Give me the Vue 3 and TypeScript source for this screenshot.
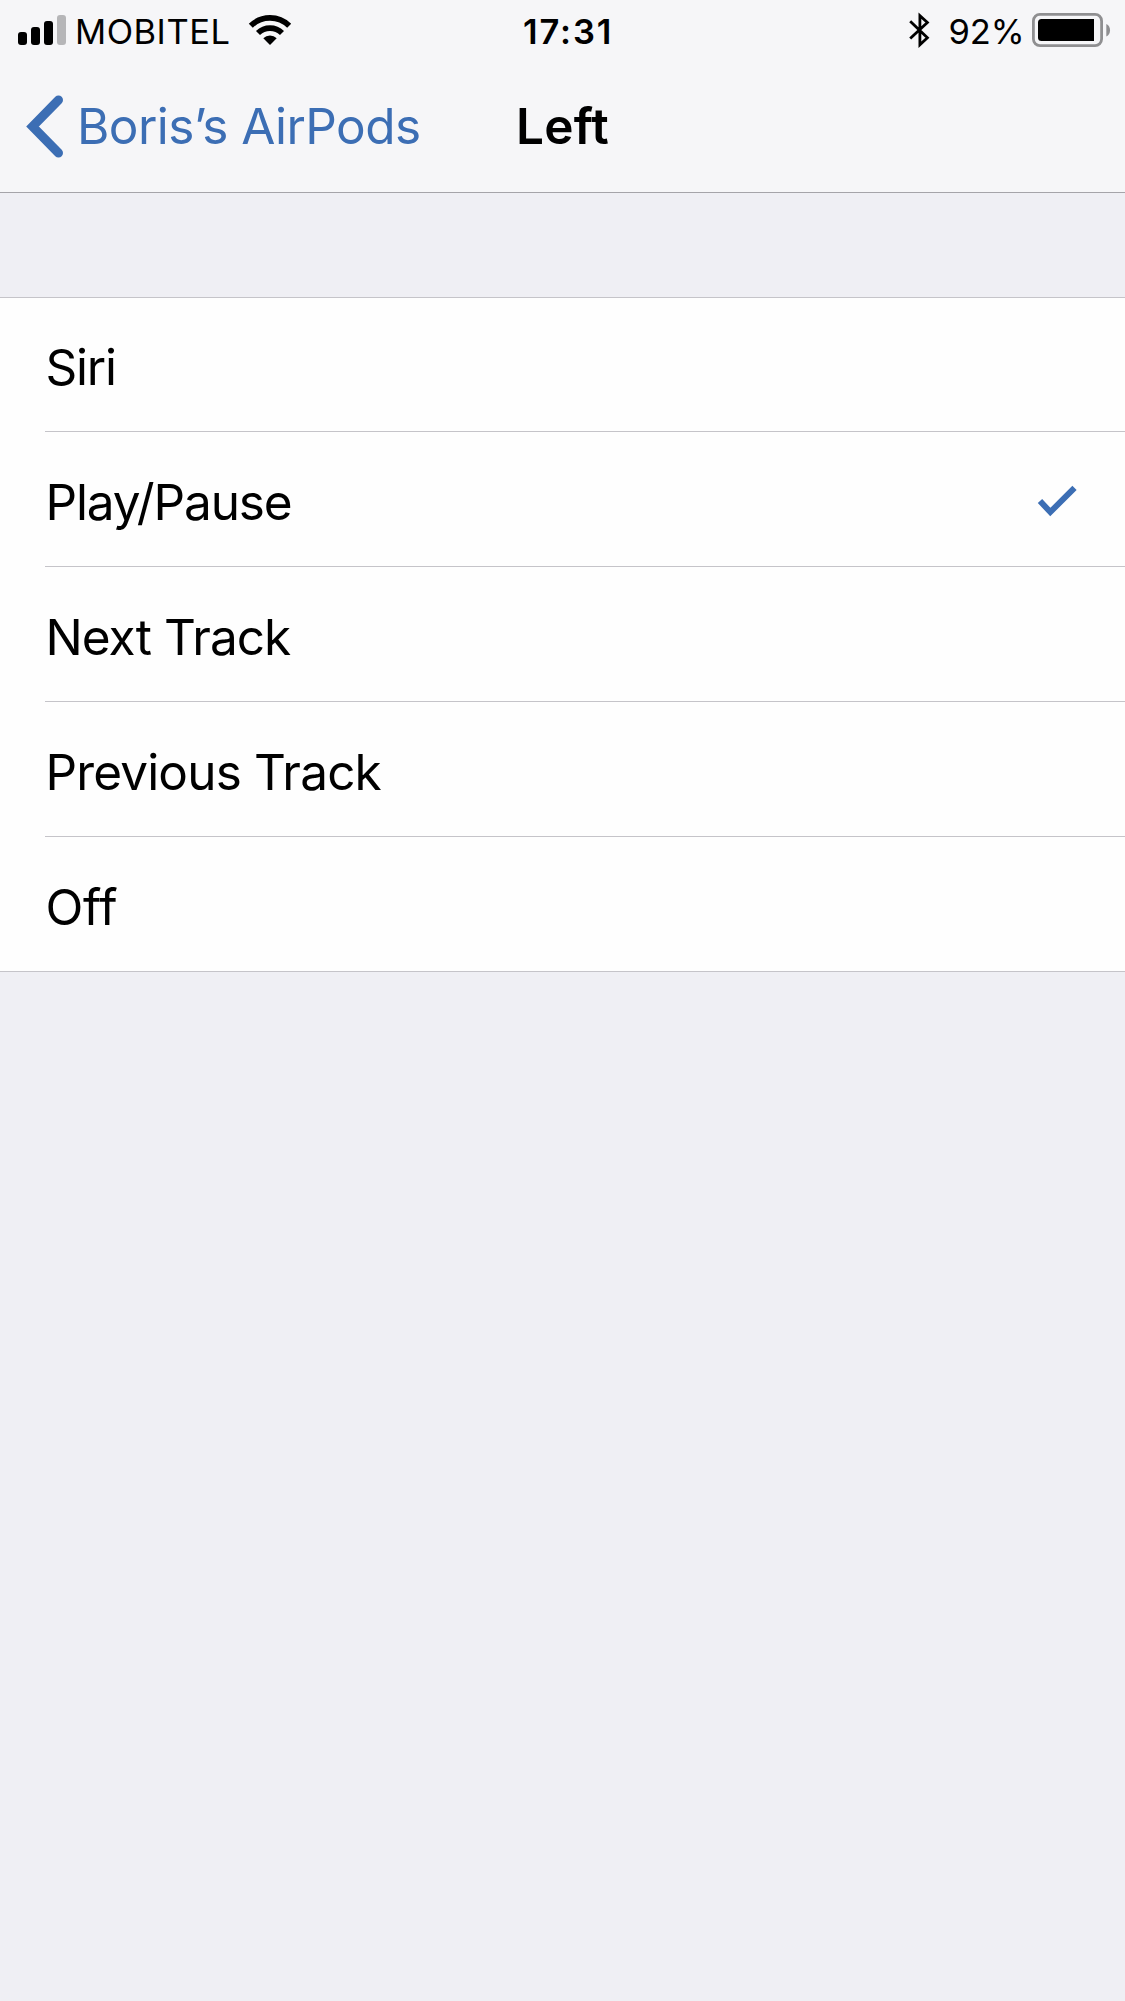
<script setup lang="ts">
import { ref } from 'vue'

interface Option {
  label: string
  tracking: number
}

const options: Option[] = [
  { label: 'Siri', tracking: -1.2 },
  { label: 'Play/Pause', tracking: -1.1 },
  { label: 'Next Track', tracking: -0.92 },
  { label: 'Previous Track', tracking: -0.83 },
  { label: 'Off', tracking: -0.2 },
]

const selected = ref('Play/Pause')
</script>

<template>
  <div class="screen">
    <header class="bar">
      <div class="status">
        <div class="status-left">
          <svg class="signal" width="48" height="30" viewBox="0 0 48 30">
            <rect x="0" y="17" width="9" height="13" rx="3" />
            <rect x="13" y="12" width="9" height="18" rx="3" />
            <rect x="26" y="6" width="9" height="24" rx="3" />
            <rect x="39" y="0" width="9" height="30" rx="3" fill="#b6b6b8" />
          </svg>
          <span class="carrier">MOBITEL</span>
          <svg class="wifi" width="42" height="30" viewBox="0 0 42 30">
            <g fill="none" stroke="#000" stroke-width="5.7">
              <path d="M1.8 10.8A27.2 27.2 0 0 1 40.2 10.8" />
              <path d="M9 18A17 17 0 0 1 33 18" />
            </g>
            <path d="M21 30L14.3 23.3A9.5 9.5 0 0 1 27.7 23.3Z" />
          </svg>
        </div>
        <span class="time">17:31</span>
        <div class="status-right">
          <svg class="bluetooth" width="26" height="44" viewBox="0 0 26 44">
            <path
              d="M5.2 13.2L22.4 29.8L14.9 36.7V7.6L22.4 14.4L5.2 30.6"
              fill="none"
              stroke="#000"
              stroke-width="2.8"
            />
          </svg>
          <span class="percent">92%</span>
          <svg class="battery" width="79" height="34" viewBox="0 0 79 34">
            <rect x="1.4" y="1.4" width="68.2" height="31.2" rx="6.5" fill="none" stroke="#8f8f91" stroke-width="2.8" />
            <path d="M62 6V28H9.5A3.5 3.5 0 0 1 6 24.5V9.5A3.5 3.5 0 0 1 9.5 6Z" />
            <path d="M74.3 11C79.3 13 79.3 21.5 74.3 23.5Z" fill="#8f8f91" />
          </svg>
        </div>
      </div>
      <nav class="nav">
        <a class="back">
          <svg class="chevron" width="42" height="72" viewBox="0 0 42 72">
            <path
              d="M37.5 10L11.5 36.5L37.5 63"
              fill="none"
              stroke="#3c6eb4"
              stroke-width="9"
              stroke-linecap="round"
            />
          </svg>
          <span class="back-label">Boris’s AirPods</span>
        </a>
        <h1 class="title">Left</h1>
      </nav>
    </header>

    <ul class="list">
      <li v-for="option in options" :key="option.label" class="row" @click="selected = option.label">
        <span class="label" :style="{ letterSpacing: option.tracking + 'px' }">{{ option.label }}</span>
        <svg v-if="option.label === selected" class="check" width="40" height="32" viewBox="0 0 40 32">
          <path d="M3 16L13.3 27L37.5 2.8" fill="none" stroke="#3c6eb4" stroke-width="6" />
        </svg>
      </li>
    </ul>
  </div>
</template>

<style>
body {
  background: #efeff4;
}
</style>

<style scoped>
.screen {
  box-sizing: border-box;
  width: 1125px;
  height: 2001px;
  overflow: hidden;
  background: #efeff4;
  color: #000;
  font-family: Inter, "Liberation Sans", sans-serif;
}

svg {
  display: block;
  flex: none;
  overflow: visible;
}

.bar {
  box-sizing: border-box;
  height: 193px;
  background: #f6f6f8;
  border-bottom: 1px solid #a5a4a9;
}

.status {
  display: flex;
  height: 60px;
  font-size: 34.5px;
  line-height: 63px;
  white-space: nowrap;
}

.status-left {
  display: flex;
  align-items: flex-start;
  width: 523px;
  padding-left: 18px;
  box-sizing: border-box;
}

.signal {
  margin-top: 15px;
}

.carrier {
  width: 174px;
  margin-left: 9px;
  letter-spacing: 0.5px;
}

.wifi {
  margin-top: 15px;
}

.time {
  font-weight: 600;
  letter-spacing: 1.9px;
}

.status-right {
  display: flex;
  align-items: flex-start;
  margin-left: auto;
  padding-right: 14px;
}

.bluetooth {
  margin-top: 8px;
}

.percent {
  width: 83.5px;
  margin-left: 17.5px;
  letter-spacing: -0.1px;
}

.battery {
  margin-top: 13px;
}

.nav {
  display: flex;
  align-items: center;
  height: 132px;
  font-size: 49.5px;
  line-height: 60px;
  white-space: nowrap;
}

.back {
  display: flex;
  align-items: center;
  width: 516px;
  padding-left: 20.5px;
  box-sizing: border-box;
  color: #3c6eb4;
}

.back-label {
  margin-left: 14.5px;
  letter-spacing: -0.57px;
}

.title {
  margin: 0;
  font-size: inherit;
  font-weight: 600;
  letter-spacing: 0.2px;
}

.list {
  margin: 104px 0 0;
  padding: 0;
  list-style: none;
  background: #fefefe;
  border-top: 1px solid #c5c4c9;
  border-bottom: 1px solid #c5c4c9;
}

.row {
  display: flex;
  align-items: center;
  justify-content: space-between;
  box-sizing: border-box;
  height: 135px;
  margin-left: 45px;
  padding: 6px 48px 0 0.4px;
  border-bottom: 1px solid #c5c4c9;
  font-size: 49.5px;
  line-height: 60px;
}

.row:first-child {
  height: 134px;
  padding-top: 5px;
}

.row:last-child {
  height: 134px;
  border-bottom: 0;
}

.check {
  margin-bottom: 3px;
}
</style>
